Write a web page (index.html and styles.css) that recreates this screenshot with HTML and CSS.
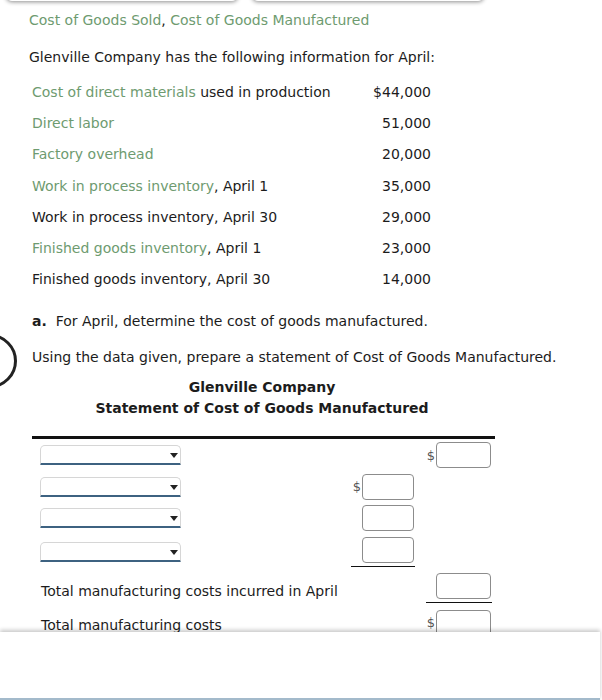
FILE: index.html
```html
<!DOCTYPE html>
<html lang="en">
<head>
    <meta charset="UTF-8">
    <meta name="viewport" content="width=device-width, initial-scale=1.0">
    <title>Cost of Goods Manufactured</title>
    <link rel="stylesheet" href="styles.css">
</head>
<body>
    <div class="tabs">
        <div class="tab"></div>
        <div class="tab"></div>
    </div>

    <div class="page">
        <p class="topic"><span class="term">Cost of Goods Sold</span>, <span class="term">Cost of Goods Manufactured</span></p>

        <p class="intro">Glenville Company has the following information for April:</p>

        <div class="data">
            <div class="data-row"><span><span class="term">Cost of direct materials</span> used in production</span><span class="amount">$44,000</span></div>
            <div class="data-row"><span class="term">Direct labor</span><span class="amount">51,000</span></div>
            <div class="data-row"><span class="term">Factory overhead</span><span class="amount">20,000</span></div>
            <div class="data-row"><span><span class="term">Work in process inventory</span>, April 1</span><span class="amount">35,000</span></div>
            <div class="data-row"><span>Work in process inventory, April 30</span><span class="amount">29,000</span></div>
            <div class="data-row"><span><span class="term">Finished goods inventory</span>, April 1</span><span class="amount">23,000</span></div>
            <div class="data-row"><span>Finished goods inventory, April 30</span><span class="amount">14,000</span></div>
        </div>

        <div class="part">
            <p class="question"><b>a.</b>&nbsp; For April, determine the cost of goods manufactured.</p>
            <div class="marker"></div>
            <p class="instruction">Using the data given, prepare a statement of Cost of Goods Manufactured.</p>

            <div class="heading">
                <div>Glenville Company</div>
                <div>Statement of Cost of Goods Manufactured</div>
            </div>

            <div class="statement">
                <div class="st-row">
                    <div class="label"><div class="select"></div></div>
                    <div class="cell"></div>
                    <div class="cell"><span class="dollar">$</span><span class="box wide"></span></div>
                </div>
                <div class="st-row">
                    <div class="label"><div class="select"></div></div>
                    <div class="cell"><span class="dollar">$</span><span class="box"></span></div>
                    <div class="cell"></div>
                </div>
                <div class="st-row">
                    <div class="label"><div class="select"></div></div>
                    <div class="cell"><span class="box"></span></div>
                    <div class="cell"></div>
                </div>
                <div class="st-row">
                    <div class="label"><div class="select"></div></div>
                    <div class="cell ruled"><span class="box"></span></div>
                    <div class="cell"></div>
                </div>
                <div class="st-row">
                    <div class="label text">Total manufacturing costs incurred in April</div>
                    <div class="cell"></div>
                    <div class="cell ruled"><span class="box wide"></span></div>
                </div>
                <div class="st-row">
                    <div class="label text">Total manufacturing costs</div>
                    <div class="cell"></div>
                    <div class="cell"><span class="dollar">$</span><span class="box wide"></span></div>
                </div>
            </div>
        </div>
    </div>

    <div class="footer"></div>
</body>
</html>
```

FILE: styles.css
```css
* {
    margin: 0;
    padding: 0;
    box-sizing: border-box;
}

body {
    width: 100vw;
    height: 100vh;
    overflow: hidden;
    background: #fff;
    font-family: "DejaVu Sans", Verdana, sans-serif;
    font-size: 14px;
    color: #1c1c1c;
}

/* cards above, cut off by the top edge */
.tabs {
    display: flex;
    gap: 14px;
    padding-left: 6px;
    height: 0;
}

.tab {
    width: 232px;
    height: 12px;
    margin-top: -11px;
    background: #fff;
    border-radius: 0 0 6px 6px;
    box-shadow: 0 1px 4px rgba(0, 0, 0, 0.45);
}

.page {
    padding-left: 29px;
}

.term {
    color: #6e9b70;
}

.topic {
    margin-top: 11px;
    line-height: 18px;
}

.intro {
    margin-top: 19px;
    line-height: 18px;
}

.data {
    width: 405px;
    margin-top: 10px;
    padding: 0 3px;
}

.data-row {
    display: flex;
    justify-content: space-between;
    align-items: center;
    height: 31.3px;
}

.part {
    position: relative;
    margin-top: 17px;
}

.question {
    padding-left: 3px;
    line-height: 18px;
}

.question b {
    font-weight: bold;
}

.marker {
    position: absolute;
    left: -66px;
    top: 22px;
    width: 54px;
    height: 54px;
    border: 3px solid #222;
    border-radius: 50%;
}

.instruction {
    margin-top: 18px;
    padding-left: 3px;
    line-height: 18px;
}

.heading {
    width: 466px;
    margin-top: 11px;
    text-align: center;
    font-weight: bold;
    line-height: 21px;
}

.statement {
    width: 463px;
    margin-top: 17px;
    margin-left: 3px;
    border-top: 3px solid #111;
    padding-right: 3px;
}

.st-row {
    display: grid;
    grid-template-columns: 1fr 64px 66px;
    column-gap: 11px;
    align-items: center;
    padding: 3px 0 2.7px;
}

.label {
    padding-left: 8px;
}

.label.text {
    padding-left: 9px;
    padding-top: 4px;
    line-height: 18px;
}

.select {
    position: relative;
    width: 141px;
    height: 20px;
    background: #fff;
    border: 1px solid #d6d6d6;
    border-bottom: 2px solid #3d6281;
    border-radius: 5px 5px 1px 1px;
}

.select::after {
    content: '';
    position: absolute;
    right: 2px;
    top: 7px;
    border-left: 4px solid transparent;
    border-right: 4px solid transparent;
    border-top: 5px solid #222;
}

.cell {
    display: flex;
    justify-content: flex-end;
    align-items: center;
}

.cell.ruled {
    padding-bottom: 2.5px;
    border-bottom: 1.5px solid #111;
    margin-bottom: 1px;
}

.dollar {
    color: #555;
    font-size: 13px;
    margin-right: 1px;
}

.box {
    display: block;
    width: 52px;
    height: 26px;
    margin-right: 1px;
    border: 1.5px solid #8c8c8c;
    border-radius: 4px;
    background: #fff;
}

.box.wide {
    width: 55px;
}

.footer {
    position: fixed;
    left: 0;
    right: 2px;
    bottom: 0;
    height: 68px;
    background: #fff;
    border-bottom: 2px solid #a3bacb;
    box-shadow: 0 -2px 4px rgba(0, 0, 0, 0.22);
}
```
